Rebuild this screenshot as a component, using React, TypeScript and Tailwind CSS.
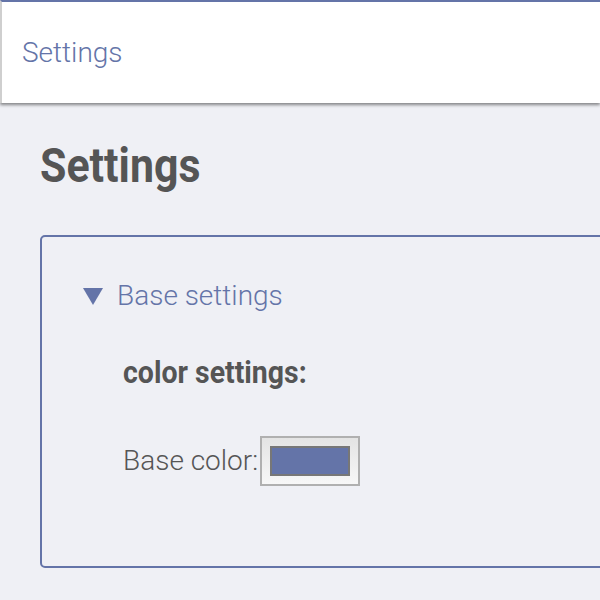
export default function App() {
  return (
    <div className="min-h-[600px] w-[600px] overflow-hidden bg-[#eff0f5] font-['Roboto',sans-serif]">
      <header className="flex h-[103px] items-center border-t-2 border-l-2 border-t-[#6474a8] border-l-[#cfcfcf] bg-white pl-5 shadow-[0_2px_3px_rgba(0,0,0,0.45)]">
        <span className="text-[28px] font-light text-[#6474a8]">Settings</span>
      </header>
      <main className="pl-10 pt-[38px]">
        <h1 className="h-[50px] text-[49px] font-bold leading-none text-[#555]">
          <span className="inline-block origin-left scale-x-[0.875]">Settings</span>
        </h1>
        <section className="mt-[44px] h-[333px] w-[600px] rounded-[5px] border-2 border-[#6474a8] pl-[41px] pt-[38px]">
          <div className="flex items-center gap-[14px] text-[#6474a8]">
            <svg width="20" height="17" viewBox="0 0 20 17" className="mt-[1px]">
              <path d="M0 0H20L10 17Z" fill="#6474a8" />
            </svg>
            <span className="text-[28px] font-light">Base settings</span>
          </div>
          <div className="pl-[40px]">
            <h2 className="mt-[35px] text-[32px] font-bold leading-[40px] text-[#555]">
              <span className="inline-block origin-left scale-x-[0.89]">color settings:</span>
            </h2>
            <div className="mt-[44px] flex items-center text-[28px] font-light text-[#555]">
              <span>Base color:</span>
              <div className="ml-[2px] flex h-[50px] w-[100px] items-center justify-center border-2 border-[#b0b0b0] bg-gradient-to-b from-[#e4e4e4] to-[#f7f7f7]">
                <div className="h-[30px] w-[80px] border-2 border-[#777] bg-[#6474a8]" />
              </div>
            </div>
          </div>
        </section>
      </main>
    </div>
  )
}
